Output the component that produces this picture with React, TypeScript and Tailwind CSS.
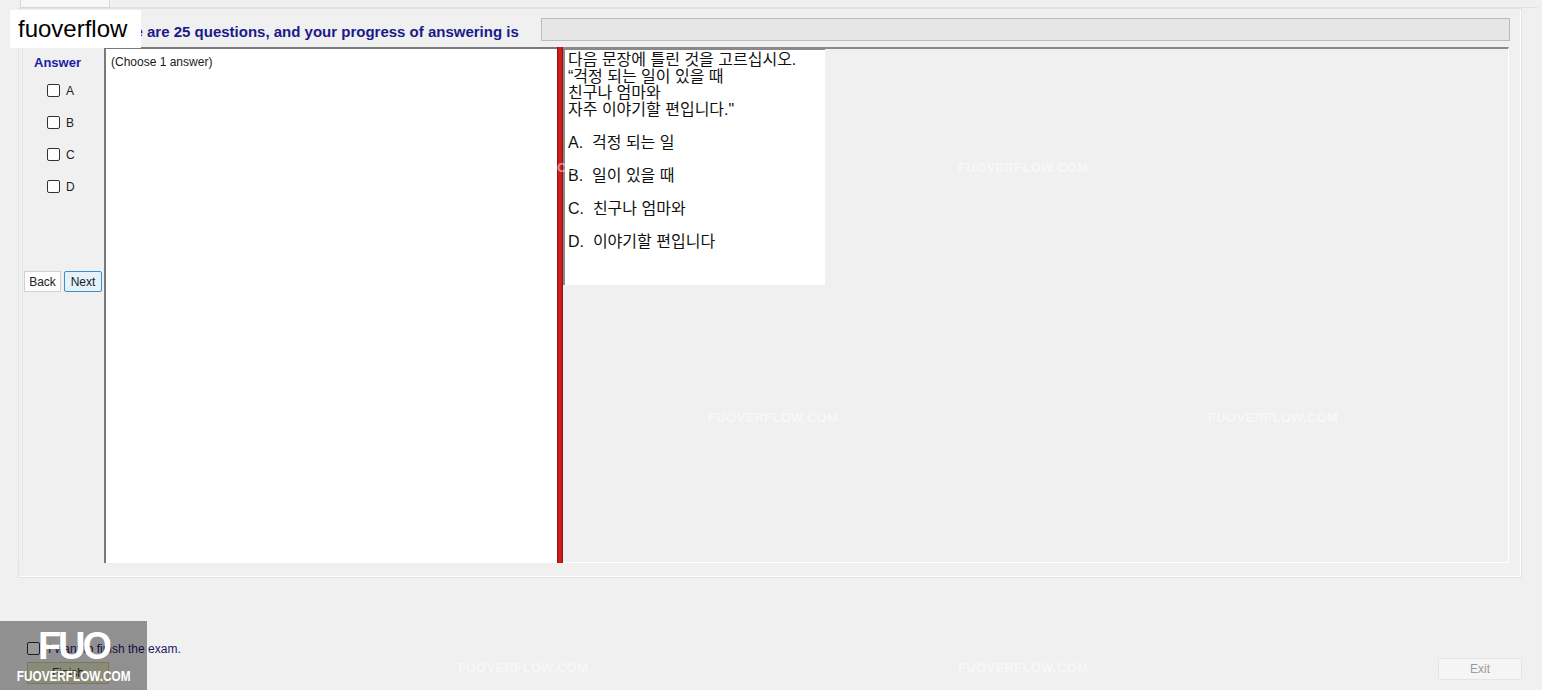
const marks = [
  { x: 458, y: 158 },
  { x: 958, y: 158 },
  { x: 208, y: 408 },
  { x: 708, y: 408 },
  { x: 1208, y: 408 },
  { x: 458, y: 658 },
  { x: 958, y: 658 },
]

const Check = ({ label }: { label: string }) => (
  <div className="flex items-center gap-[6px] h-[13px]">
    <span className="w-[13px] h-[13px] border border-[#333333] rounded-[2px] bg-white" />
    <span className="text-[12px] leading-none text-[#222]">{label}</span>
  </div>
)

const options = ["A.  걱정 되는 일", "B.  일이 있을 때", "C.  친구나 엄마와", "D.  이야기할 편입니다"]

const App = () => {
  return (
    <div
      className="relative w-[1542px] h-[690px] overflow-hidden bg-[#f0f0f0] text-[#111]"
      style={{ fontFamily: '"Liberation Sans", Arial, "Noto Sans CJK KR", sans-serif' }}
    >
      {/* top strip with tab */}
      <div className="flex h-[8px] items-end">
        <div className="ml-[20px] w-[90px] h-[8px] bg-[#f7f7f7] border-x border-b border-[#d8d8d8]" />
        <div className="flex-1 h-[2px] border-b border-[#e2e2e2] mr-[4px]" />
      </div>

      {/* main group */}
      <div className="ml-[18px] w-[1504px] h-[570px] border border-[#e2e2e2] shadow-[inset_-1px_-1px_0_#ffffff] flex flex-col">
        {/* header row */}
        <div className="flex items-start h-[38px] pt-[9px]">
          <div className="w-[522px] pl-[83px] text-[15px] font-bold text-[#1a1a8a] leading-[28px] whitespace-nowrap">
            There are 25 questions, and your progress of answering is
          </div>
          <div className="w-[969px] h-[23px] bg-[#e6e6e6] border border-[#bcbcbc]" />
        </div>

        {/* content row */}
        <div className="flex h-[516px] pl-[3px] pr-[12px]">
          <div className="w-[82px] h-full flex flex-col items-center pt-[8px] border-l border-[#e8e8e8]">
            <div className="text-[13px] font-bold text-[#1c1ca6] leading-[16px] w-full pl-[11px]">Answer</div>
            <div className="flex flex-col gap-[19px] mt-[13px] w-full pl-[24px]">
              <Check label="A" />
              <Check label="B" />
              <Check label="C" />
              <Check label="D" />
            </div>
            <div className="flex gap-[3px] mt-[78px] w-full pl-[1px]">
              <button className="w-[37px] h-[21px] bg-[#fdfdfd] border border-[#d0d0d0] text-[12px] text-[#222] leading-none">
                Back
              </button>
              <button className="w-[38px] h-[21px] bg-[#e5f1fb] border border-[#3a8fd0] rounded-[2px] text-[12px] text-[#222] leading-none">
                Next
              </button>
            </div>
          </div>

          <div className="w-[453px] h-full bg-white border-t-2 border-l-2 border-[#7a7a7a] pl-[5px] pt-[6px]">
            <p className="text-[12px] leading-[14px] text-[#1a1a1a]">(Choose 1 answer)</p>
          </div>

          <div className="w-[6px] h-full bg-[#d01b1b] border-x border-[#8c1414]" />

          <div className="flex-1 h-full border-t-2 border-[#8a8a8a] border-b border-r border-b-[#ffffff] border-r-[#ffffff]">
            <div className="w-[262px] h-[236px] bg-white border-l-2 border-t border-[#8a8a8a] pl-[3px] pt-[2px] text-[16px] leading-[16.5px] text-[#111]">
              <p>다음 문장에 틀린 것을 고르십시오.</p>
              <p>“걱정 되는 일이 있을 때</p>
              <p>친구나 엄마와</p>
              <p>자주 이야기할 편입니다."</p>
              <div className="flex flex-col gap-[16.5px] mt-[16.5px]">
                {options.map((o, i) => (
                  <p key={i} className="whitespace-pre">{o}</p>
                ))}
              </div>
            </div>
          </div>
        </div>
      </div>

      {/* bottom */}
      <div className="flex justify-between items-end pr-[20px]">
        <div className="pl-[27px] pt-[60px] flex flex-col gap-[4px]">
          <div className="flex items-center gap-[8px]">
            <span className="w-[13px] h-[13px] border border-[#333] rounded-[2px] bg-white" />
            <span className="text-[12px] text-[#1a1a6a] mt-[2px]">I want to finish the exam.</span>
          </div>
          <button className="w-[82px] h-[22px] bg-[#e6e8c8] border border-[#c8cc9a] text-[12px] text-[#333]">Finish</button>
        </div>
        <button className="w-[84px] h-[22px] mb-[4px] bg-[#f5f5f5] border border-[#e4e4e4] rounded-[2px] text-[12px] text-[#9a9a9a]">
          Exit
        </button>
      </div>

      {/* faint watermarks */}
      {marks.map((m, i) => (
        <span
          key={i}
          className="absolute text-[13px] font-bold tracking-wide text-white/50 pointer-events-none"
          style={{ left: m.x, top: m.y }}
        >
          FUOVERFLOW.COM
        </span>
      ))}

      {/* fuoverflow label */}
      <div className="absolute left-[10px] top-[10px] w-[131px] h-[38px] bg-white flex items-center pl-[8px] text-[24px] text-black leading-none">
        fuoverflow
      </div>

      {/* FUO badge */}
      <div className="absolute left-0 top-[621px] w-[147px] h-[69px] bg-black/40 flex flex-col items-center">
        <span className="text-[38px] font-bold text-white leading-[40px] tracking-[-3px] mt-[5px]">FUO</span>
        <span className="text-[14px] font-bold text-white leading-[18px] mt-[1px] scale-x-[0.84]">
          FUOVERFLOW.COM
        </span>
      </div>
    </div>
  )
}

export default App
